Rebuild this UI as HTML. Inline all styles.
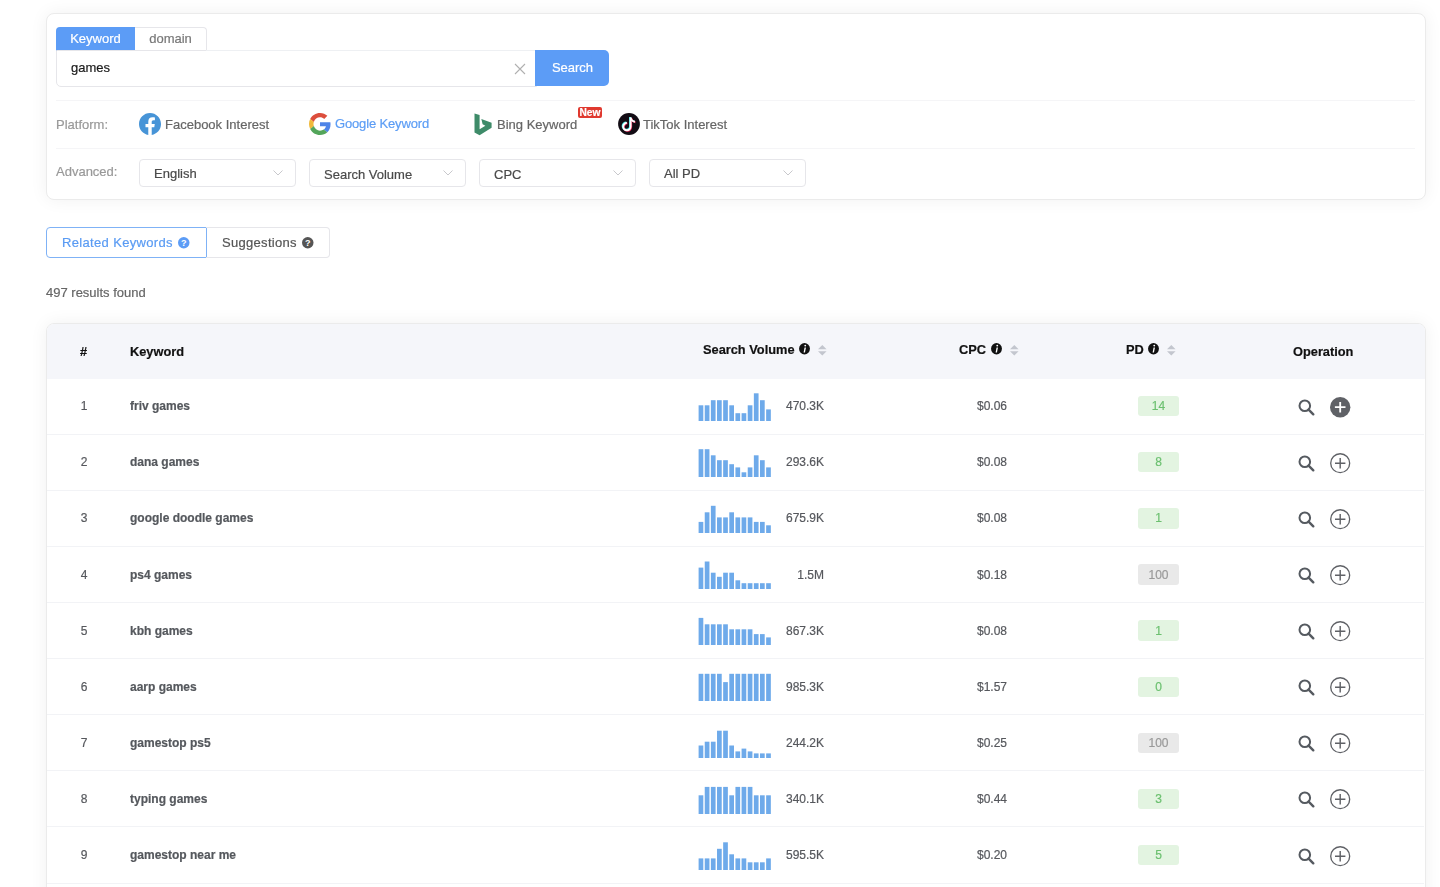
<!DOCTYPE html>
<html><head><meta charset="utf-8"><style>
html,body{margin:0;padding:0;background:#fff;width:1440px;height:887px;overflow:hidden;}
body{position:relative;font-family:"Liberation Sans",sans-serif;}
.t{position:absolute;white-space:nowrap;line-height:20px;will-change:transform;-webkit-text-stroke:0.2px currentColor;font-family:"Liberation Sans",sans-serif;}
.box{position:absolute;}
.ic{position:absolute;overflow:visible;}
.card{position:absolute;background:#fff;border:1px solid #ebebeb;border-radius:8px;box-sizing:border-box;box-shadow:0 0 18px rgba(0,0,0,0.06);}
</style></head><body>
<div class="card" style="left:46px;top:13px;width:1380px;height:187px;"></div>
<div class="box" style="left:56px;top:27px;width:79px;height:23.5px;background:#5c9cf6;border-radius:4px 0 0 0;"></div>
<div class="t" style="left:56.0px;width:79px;text-align:center;top:29px;font-size:13px;color:#fff;font-weight:normal;">Keyword</div>
<div class="box" style="left:135px;top:27px;width:71.5px;height:23.5px;border:1px solid #e6e6ea;border-left:none;border-bottom:none;border-radius:0 4px 0 0;box-sizing:border-box;"></div>
<div class="t" style="left:135.0px;width:71px;text-align:center;top:29px;font-size:13px;color:#777;font-weight:normal;">domain</div>
<div class="box" style="left:56px;top:50px;width:481px;height:36.8px;border:1px solid #e6e6ea;border-radius:0 0 0 5px;box-sizing:border-box;"></div>
<div class="box" style="left:206px;top:50px;width:330px;height:1px;background:#eef0f3;"></div>
<div class="t" style="left:70.6px;top:58px;font-size:13px;color:#1a1a1a;font-weight:normal;">games</div>
<svg class="ic" style="left:514.2px;top:62.9px" width="12" height="12" viewBox="0 0 12 12"><path d="M1 1L11 11M11 1L1 11" stroke="#b0b0b0" stroke-width="1.1"/></svg>
<div class="box" style="left:535.4px;top:49.8px;width:73.6px;height:36.6px;background:#5c9cf6;border-radius:0 5px 5px 0;"></div>
<div class="t" style="left:535.5px;width:73px;text-align:center;top:58px;font-size:13px;color:#fff;font-weight:normal;">Search</div>
<div class="box" style="left:56px;top:100px;width:1359px;height:1px;background:#f5f5f7;"></div>
<div class="box" style="left:56px;top:148px;width:1359px;height:1px;background:#f5f5f7;"></div>
<div class="t" style="left:56.3px;top:115px;font-size:13px;color:#999;font-weight:normal;">Platform:</div>
<svg class="ic" style="left:139px;top:113px" width="22" height="22" viewBox="0 0 24 24"><path fill="#4794d7" d="M24 12.073c0-6.627-5.373-12-12-12s-12 5.373-12 12c0 5.99 4.388 10.954 10.125 11.854v-8.385H7.078v-3.47h3.047V9.43c0-3.007 1.792-4.669 4.533-4.669 1.312 0 2.686.235 2.686.235v2.953H15.83c-1.491 0-1.956.925-1.956 1.874v2.25h3.328l-.532 3.47h-2.796v8.385C19.612 23.027 24 18.062 24 12.073z"/></svg>
<div class="t" style="left:164.6px;top:115px;font-size:13px;color:#666;font-weight:normal;">Facebook Interest</div>
<svg class="ic" style="left:309px;top:113px" width="22" height="22" viewBox="0 0 48 48"><path fill="#dc4e3c" d="M24 9.5c3.54 0 6.71 1.22 9.21 3.6l6.85-6.85C35.9 2.38 30.47 0 24 0 14.62 0 6.51 5.38 2.56 13.22l7.98 6.19C12.43 13.72 17.74 9.5 24 9.5z"/><path fill="#4e84e8" d="M46.98 24.55c0-1.570-.15-3.09-.38-4.55H24v9.02h12.94c-.58 2.96-2.26 5.48-4.78 7.18l7.73 6c4.51-4.18 7.09-10.36 7.09-17.65z"/><path fill="#f0b93a" d="M10.53 28.59c-.48-1.45-.76-2.99-.76-4.59s.27-3.14.76-4.59l-7.98-6.19C.92 16.46 0 20.12 0 24c0 3.88.92 7.54 2.56 10.78l7.97-6.19z"/><path fill="#53a55a" d="M24 48c6.48 0 11.930-2.13 15.89-5.81l-7.73-6c-2.15 1.45-4.92 2.3-8.160 2.3-6.26 0-11.57-4.22-13.47-9.91l-7.98 6.19C6.51 42.62 14.62 48 24 48z"/></svg>
<div class="t" style="left:334.9px;top:114px;font-size:13px;color:#5c9df5;font-weight:normal;letter-spacing:-0.15px;">Google Keyword</div>
<svg class="ic" style="left:473.5px;top:112.5px" width="18" height="23" viewBox="0 0 18 23"><path fill="#3e8b69" d="M0.5 0.4L5.6 2.1V16.3L11.4 12.8L8.6 11.3L7.35 6L17.6 9.85V14.8L5.6 22.3L0.5 19.5Z"/></svg>
<div class="t" style="left:497.1px;top:115px;font-size:13px;color:#666;font-weight:normal;">Bing Keyword</div>
<div class="box" style="left:578px;top:106.8px;width:24px;height:10.8px;background:#e0392f;border-radius:2px;"></div>
<div class="t" style="left:578.2px;width:24px;text-align:center;top:103px;font-size:10.2px;color:#fff;font-weight:bold;">New</div>
<svg class="ic" style="left:617.5px;top:112.6px" width="22" height="22" viewBox="0 0 22 22"><circle cx="11" cy="11" r="10.9" fill="#120c14"/><g transform="translate(-0.6,-0.5)" fill="none" stroke="#3ee8e8" stroke-width="1.9"><path d="M12.6 4.6V13.6A3.7 3.7 0 1 1 8.9 9.9"/><path d="M12.6 4.6C13 6.9 14.6 8.4 16.9 8.7"/></g><g transform="translate(0.6,0.5)" fill="none" stroke="#f0285a" stroke-width="1.9"><path d="M12.6 4.6V13.6A3.7 3.7 0 1 1 8.9 9.9"/><path d="M12.6 4.6C13 6.9 14.6 8.4 16.9 8.7"/></g><g transform="translate(0,0)" fill="none" stroke="#fff" stroke-width="1.9"><path d="M12.6 4.6V13.6A3.7 3.7 0 1 1 8.9 9.9"/><path d="M12.6 4.6C13 6.9 14.6 8.4 16.9 8.7"/></g></svg>
<div class="t" style="left:643.3px;top:115px;font-size:13px;color:#666;font-weight:normal;">TikTok Interest</div>
<div class="t" style="left:56.3px;top:162px;font-size:13px;color:#999;font-weight:normal;">Advanced:</div>
<div class="box" style="left:139px;top:159.3px;width:157px;height:27.6px;border:1px solid #e6e6ea;border-radius:4px;box-sizing:border-box;"></div>
<div class="t" style="left:153.6px;top:164px;font-size:13px;color:#4a4a4a;font-weight:normal;">English</div>
<svg class="ic" style="left:273.3px;top:169.9px" width="10" height="6" viewBox="0 0 10 6"><path d="M0.5 0.5L5 5L9.5 0.5" fill="none" stroke="#c8c8cc" stroke-width="1"/></svg>
<div class="box" style="left:309px;top:159.3px;width:157px;height:27.6px;border:1px solid #e6e6ea;border-radius:4px;box-sizing:border-box;"></div>
<div class="t" style="left:323.6px;top:165px;font-size:13px;color:#4a4a4a;font-weight:normal;">Search Volume</div>
<svg class="ic" style="left:443.3px;top:169.9px" width="10" height="6" viewBox="0 0 10 6"><path d="M0.5 0.5L5 5L9.5 0.5" fill="none" stroke="#c8c8cc" stroke-width="1"/></svg>
<div class="box" style="left:479px;top:159.3px;width:157px;height:27.6px;border:1px solid #e6e6ea;border-radius:4px;box-sizing:border-box;"></div>
<div class="t" style="left:493.6px;top:165px;font-size:13px;color:#4a4a4a;font-weight:normal;">CPC</div>
<svg class="ic" style="left:613.3px;top:169.9px" width="10" height="6" viewBox="0 0 10 6"><path d="M0.5 0.5L5 5L9.5 0.5" fill="none" stroke="#c8c8cc" stroke-width="1"/></svg>
<div class="box" style="left:649px;top:159.3px;width:157px;height:27.6px;border:1px solid #e6e6ea;border-radius:4px;box-sizing:border-box;"></div>
<div class="t" style="left:663.6px;top:164px;font-size:13px;color:#4a4a4a;font-weight:normal;">All PD</div>
<svg class="ic" style="left:783.3px;top:169.9px" width="10" height="6" viewBox="0 0 10 6"><path d="M0.5 0.5L5 5L9.5 0.5" fill="none" stroke="#c8c8cc" stroke-width="1"/></svg>
<div class="box" style="left:46px;top:227px;width:161px;height:31px;border:1px solid #7fb2f6;border-radius:4px 0 0 4px;box-sizing:border-box;"></div>
<div class="box" style="left:206px;top:227px;width:124px;height:31px;border:1px solid #e6e6ea;border-left:none;border-radius:0 4px 4px 0;box-sizing:border-box;"></div>
<div class="t" style="left:62px;top:233px;font-size:13px;color:#5a9bf3;font-weight:normal;letter-spacing:0.34px;">Related Keywords</div>
<svg class="ic" style="left:178.3px;top:237px" width="11.5" height="11.5" viewBox="0 0 12 12"><circle cx="6" cy="6" r="6" fill="#5c9cf6"/><text x="6" y="9.6" text-anchor="middle" font-size="9.5" font-weight="bold" fill="#fff" font-family="Liberation Sans">?</text></svg>
<div class="t" style="left:221.8px;top:233px;font-size:13px;color:#555;font-weight:normal;letter-spacing:0.3px;">Suggestions</div>
<svg class="ic" style="left:302.2px;top:237px" width="11.5" height="11.5" viewBox="0 0 12 12"><circle cx="6" cy="6" r="6" fill="#555"/><text x="6" y="9.6" text-anchor="middle" font-size="9.5" font-weight="bold" fill="#fff" font-family="Liberation Sans">?</text></svg>
<div class="t" style="left:45.8px;top:283px;font-size:13px;color:#666;font-weight:normal;">497 results found</div>
<div class="card" style="left:46px;top:323px;width:1380px;height:620px;overflow:hidden;"><div style="position:absolute;left:0;top:0;right:0;height:54.8px;background:#f5f6fa;"></div></div>
<div class="t" style="left:79.9px;top:342px;font-size:12.8px;color:#111;font-weight:bold;">#</div>
<div class="t" style="left:130px;top:342px;font-size:12.8px;color:#111;font-weight:bold;">Keyword</div>
<div class="t" style="left:703px;top:340px;font-size:12.8px;color:#111;font-weight:bold;">Search Volume</div>
<svg class="ic" style="left:799.2px;top:343.3px" width="11" height="11.4" viewBox="0 0 11 11.4"><ellipse cx="5.5" cy="5.7" rx="5.45" ry="5.7" fill="#111"/><circle cx="6.25" cy="2.6" r="0.95" fill="#fff"/><path d="M5.55 4.6H6.95L6.0 9.5H4.6Z" fill="#fff"/></svg>
<svg class="ic" style="left:818.2px;top:344.7px" width="8.6" height="10.4" viewBox="0 0 8.6 10.4"><path d="M4.3 0L8.6 4.2H0Z" fill="#c3c6ce"/><path d="M4.3 10.4L8.6 6.2H0Z" fill="#c3c6ce"/></svg>
<div class="t" style="left:959px;top:340px;font-size:12.8px;color:#111;font-weight:bold;">CPC</div>
<svg class="ic" style="left:991.1px;top:343.3px" width="11" height="11.4" viewBox="0 0 11 11.4"><ellipse cx="5.5" cy="5.7" rx="5.45" ry="5.7" fill="#111"/><circle cx="6.25" cy="2.6" r="0.95" fill="#fff"/><path d="M5.55 4.6H6.95L6.0 9.5H4.6Z" fill="#fff"/></svg>
<svg class="ic" style="left:1009.7px;top:344.7px" width="8.6" height="10.4" viewBox="0 0 8.6 10.4"><path d="M4.3 0L8.6 4.2H0Z" fill="#c3c6ce"/><path d="M4.3 10.4L8.6 6.2H0Z" fill="#c3c6ce"/></svg>
<div class="t" style="left:1126px;top:340px;font-size:12.8px;color:#111;font-weight:bold;">PD</div>
<svg class="ic" style="left:1148.2px;top:343.3px" width="11" height="11.4" viewBox="0 0 11 11.4"><ellipse cx="5.5" cy="5.7" rx="5.45" ry="5.7" fill="#111"/><circle cx="6.25" cy="2.6" r="0.95" fill="#fff"/><path d="M5.55 4.6H6.95L6.0 9.5H4.6Z" fill="#fff"/></svg>
<svg class="ic" style="left:1166.8px;top:344.7px" width="8.6" height="10.4" viewBox="0 0 8.6 10.4"><path d="M4.3 0L8.6 4.2H0Z" fill="#c3c6ce"/><path d="M4.3 10.4L8.6 6.2H0Z" fill="#c3c6ce"/></svg>
<div class="t" style="left:1293px;top:342px;font-size:12.8px;color:#111;font-weight:bold;">Operation</div>
<div class="box" style="left:47px;top:433.500px;width:1377px;height:1px;background:#f2f3f6;"></div>
<div class="t" style="left:68.5px;width:30px;text-align:center;top:396px;font-size:12px;color:#56585d;font-weight:normal;">1</div>
<div class="t" style="left:130px;top:396px;font-size:12px;color:#55585d;font-weight:bold;">friv games</div>
<svg class="ic" style="left:698px;top:390.800px" width="74" height="30" viewBox="0 0 74 30"><rect x="0.600" y="14.30" width="4.7" height="15.7" fill="#6eaaea"/><rect x="6.740" y="14.30" width="4.7" height="15.7" fill="#6eaaea"/><rect x="12.880" y="9.20" width="4.7" height="20.8" fill="#6eaaea"/><rect x="19.020" y="9.20" width="4.7" height="20.8" fill="#6eaaea"/><rect x="25.160" y="9.20" width="4.7" height="20.8" fill="#6eaaea"/><rect x="31.300" y="14.30" width="4.7" height="15.7" fill="#6eaaea"/><rect x="37.440" y="22.20" width="4.7" height="7.8" fill="#6eaaea"/><rect x="43.580" y="22.20" width="4.7" height="7.8" fill="#6eaaea"/><rect x="49.720" y="14.30" width="4.7" height="15.7" fill="#6eaaea"/><rect x="55.860" y="2.30" width="4.7" height="27.7" fill="#6eaaea"/><rect x="62.000" y="9.20" width="4.7" height="20.8" fill="#6eaaea"/><rect x="68.140" y="18.40" width="4.7" height="11.6" fill="#6eaaea"/></svg>
<div class="t" style="left:764px;width:60px;text-align:right;top:396px;font-size:12px;color:#56585d;font-weight:normal;">470.3K</div>
<div class="t" style="left:977px;top:396px;font-size:12px;color:#56585d;font-weight:normal;">$0.06</div>
<div class="box" style="left:1138.3px;top:395.900px;width:41px;height:20.4px;background:#e3f4e1;border-radius:3px;"></div>
<div class="t" style="left:1138.3px;width:41px;text-align:center;top:396px;font-size:12px;color:#6cc070;font-weight:normal;">14</div>
<svg class="ic" style="left:1297.9px;top:398.500px" width="17" height="17" viewBox="0 0 17 17"><circle cx="6.8" cy="6.8" r="5.3" fill="none" stroke="#555a60" stroke-width="2"/><path d="M10.6 10.6L15.3 15.3" stroke="#555a60" stroke-width="2.4" stroke-linecap="round"/></svg>
<svg class="ic" style="left:1329.5px;top:396.500px" width="20.4" height="20.4" viewBox="0 0 20 20"><circle cx="10" cy="10" r="10" fill="#5f6166"/><path d="M10 4.8V15.2M4.8 10H15.2" stroke="#fff" stroke-width="1.8"/></svg>
<div class="box" style="left:47px;top:489.625px;width:1377px;height:1px;background:#f2f3f6;"></div>
<div class="t" style="left:68.5px;width:30px;text-align:center;top:452px;font-size:12px;color:#56585d;font-weight:normal;">2</div>
<div class="t" style="left:130px;top:452px;font-size:12px;color:#55585d;font-weight:bold;">dana games</div>
<svg class="ic" style="left:698px;top:446.925px" width="74" height="30" viewBox="0 0 74 30"><rect x="0.600" y="2.20" width="4.7" height="27.8" fill="#6eaaea"/><rect x="6.740" y="2.20" width="4.7" height="27.8" fill="#6eaaea"/><rect x="12.880" y="8.30" width="4.7" height="21.7" fill="#6eaaea"/><rect x="19.020" y="13.20" width="4.7" height="16.8" fill="#6eaaea"/><rect x="25.160" y="13.20" width="4.7" height="16.8" fill="#6eaaea"/><rect x="31.300" y="17.20" width="4.7" height="12.8" fill="#6eaaea"/><rect x="37.440" y="20.40" width="4.7" height="9.6" fill="#6eaaea"/><rect x="43.580" y="25.30" width="4.7" height="4.7" fill="#6eaaea"/><rect x="49.720" y="20.40" width="4.7" height="9.6" fill="#6eaaea"/><rect x="55.860" y="8.30" width="4.7" height="21.7" fill="#6eaaea"/><rect x="62.000" y="13.20" width="4.7" height="16.8" fill="#6eaaea"/><rect x="68.140" y="20.40" width="4.7" height="9.6" fill="#6eaaea"/></svg>
<div class="t" style="left:764px;width:60px;text-align:right;top:452px;font-size:12px;color:#56585d;font-weight:normal;">293.6K</div>
<div class="t" style="left:977px;top:452px;font-size:12px;color:#56585d;font-weight:normal;">$0.08</div>
<div class="box" style="left:1138.3px;top:452.025px;width:41px;height:20.4px;background:#e3f4e1;border-radius:3px;"></div>
<div class="t" style="left:1138.3px;width:41px;text-align:center;top:452px;font-size:12px;color:#6cc070;font-weight:normal;">8</div>
<svg class="ic" style="left:1297.9px;top:454.625px" width="17" height="17" viewBox="0 0 17 17"><circle cx="6.8" cy="6.8" r="5.3" fill="none" stroke="#555a60" stroke-width="2"/><path d="M10.6 10.6L15.3 15.3" stroke="#555a60" stroke-width="2.4" stroke-linecap="round"/></svg>
<svg class="ic" style="left:1329.5px;top:452.625px" width="20.4" height="20.4" viewBox="0 0 20 20"><circle cx="10" cy="10" r="9.3" fill="none" stroke="#5f6166" stroke-width="1.3"/><path d="M10 4.9V15.1M4.9 10H15.1" stroke="#5f6166" stroke-width="1.4"/></svg>
<div class="box" style="left:47px;top:545.750px;width:1377px;height:1px;background:#f2f3f6;"></div>
<div class="t" style="left:68.5px;width:30px;text-align:center;top:508px;font-size:12px;color:#56585d;font-weight:normal;">3</div>
<div class="t" style="left:130px;top:508px;font-size:12px;color:#55585d;font-weight:bold;">google doodle games</div>
<svg class="ic" style="left:698px;top:503.050px" width="74" height="30" viewBox="0 0 74 30"><rect x="0.600" y="18.90" width="4.7" height="11.1" fill="#6eaaea"/><rect x="6.740" y="9.30" width="4.7" height="20.7" fill="#6eaaea"/><rect x="12.880" y="2.80" width="4.7" height="27.2" fill="#6eaaea"/><rect x="19.020" y="14.40" width="4.7" height="15.6" fill="#6eaaea"/><rect x="25.160" y="14.40" width="4.7" height="15.6" fill="#6eaaea"/><rect x="31.300" y="9.30" width="4.7" height="20.7" fill="#6eaaea"/><rect x="37.440" y="14.40" width="4.7" height="15.6" fill="#6eaaea"/><rect x="43.580" y="14.40" width="4.7" height="15.6" fill="#6eaaea"/><rect x="49.720" y="14.40" width="4.7" height="15.6" fill="#6eaaea"/><rect x="55.860" y="18.90" width="4.7" height="11.1" fill="#6eaaea"/><rect x="62.000" y="18.90" width="4.7" height="11.1" fill="#6eaaea"/><rect x="68.140" y="22.30" width="4.7" height="7.7" fill="#6eaaea"/></svg>
<div class="t" style="left:764px;width:60px;text-align:right;top:508px;font-size:12px;color:#56585d;font-weight:normal;">675.9K</div>
<div class="t" style="left:977px;top:508px;font-size:12px;color:#56585d;font-weight:normal;">$0.08</div>
<div class="box" style="left:1138.3px;top:508.150px;width:41px;height:20.4px;background:#e3f4e1;border-radius:3px;"></div>
<div class="t" style="left:1138.3px;width:41px;text-align:center;top:508px;font-size:12px;color:#6cc070;font-weight:normal;">1</div>
<svg class="ic" style="left:1297.9px;top:510.750px" width="17" height="17" viewBox="0 0 17 17"><circle cx="6.8" cy="6.8" r="5.3" fill="none" stroke="#555a60" stroke-width="2"/><path d="M10.6 10.6L15.3 15.3" stroke="#555a60" stroke-width="2.4" stroke-linecap="round"/></svg>
<svg class="ic" style="left:1329.5px;top:508.750px" width="20.4" height="20.4" viewBox="0 0 20 20"><circle cx="10" cy="10" r="9.3" fill="none" stroke="#5f6166" stroke-width="1.3"/><path d="M10 4.9V15.1M4.9 10H15.1" stroke="#5f6166" stroke-width="1.4"/></svg>
<div class="box" style="left:47px;top:601.875px;width:1377px;height:1px;background:#f2f3f6;"></div>
<div class="t" style="left:68.5px;width:30px;text-align:center;top:565px;font-size:12px;color:#56585d;font-weight:normal;">4</div>
<div class="t" style="left:130px;top:565px;font-size:12px;color:#55585d;font-weight:bold;">ps4 games</div>
<svg class="ic" style="left:698px;top:559.175px" width="74" height="30" viewBox="0 0 74 30"><rect x="0.600" y="8.60" width="4.7" height="21.4" fill="#6eaaea"/><rect x="6.740" y="2.50" width="4.7" height="27.5" fill="#6eaaea"/><rect x="12.880" y="13.70" width="4.7" height="16.3" fill="#6eaaea"/><rect x="19.020" y="17.80" width="4.7" height="12.2" fill="#6eaaea"/><rect x="25.160" y="13.70" width="4.7" height="16.3" fill="#6eaaea"/><rect x="31.300" y="13.70" width="4.7" height="16.3" fill="#6eaaea"/><rect x="37.440" y="21.30" width="4.7" height="8.7" fill="#6eaaea"/><rect x="43.580" y="24.20" width="4.7" height="5.8" fill="#6eaaea"/><rect x="49.720" y="24.20" width="4.7" height="5.8" fill="#6eaaea"/><rect x="55.860" y="24.20" width="4.7" height="5.8" fill="#6eaaea"/><rect x="62.000" y="24.20" width="4.7" height="5.8" fill="#6eaaea"/><rect x="68.140" y="24.20" width="4.7" height="5.8" fill="#6eaaea"/></svg>
<div class="t" style="left:764px;width:60px;text-align:right;top:565px;font-size:12px;color:#56585d;font-weight:normal;">1.5M</div>
<div class="t" style="left:977px;top:565px;font-size:12px;color:#56585d;font-weight:normal;">$0.18</div>
<div class="box" style="left:1138.3px;top:564.275px;width:41px;height:20.4px;background:#e9e9e9;border-radius:3px;"></div>
<div class="t" style="left:1138.3px;width:41px;text-align:center;top:565px;font-size:12px;color:#999;font-weight:normal;">100</div>
<svg class="ic" style="left:1297.9px;top:566.875px" width="17" height="17" viewBox="0 0 17 17"><circle cx="6.8" cy="6.8" r="5.3" fill="none" stroke="#555a60" stroke-width="2"/><path d="M10.6 10.6L15.3 15.3" stroke="#555a60" stroke-width="2.4" stroke-linecap="round"/></svg>
<svg class="ic" style="left:1329.5px;top:564.875px" width="20.4" height="20.4" viewBox="0 0 20 20"><circle cx="10" cy="10" r="9.3" fill="none" stroke="#5f6166" stroke-width="1.3"/><path d="M10 4.9V15.1M4.9 10H15.1" stroke="#5f6166" stroke-width="1.4"/></svg>
<div class="box" style="left:47px;top:658.000px;width:1377px;height:1px;background:#f2f3f6;"></div>
<div class="t" style="left:68.5px;width:30px;text-align:center;top:621px;font-size:12px;color:#56585d;font-weight:normal;">5</div>
<div class="t" style="left:130px;top:621px;font-size:12px;color:#55585d;font-weight:bold;">kbh games</div>
<svg class="ic" style="left:698px;top:615.300px" width="74" height="30" viewBox="0 0 74 30"><rect x="0.600" y="2.90" width="4.7" height="27.1" fill="#6eaaea"/><rect x="6.740" y="9.30" width="4.7" height="20.7" fill="#6eaaea"/><rect x="12.880" y="9.30" width="4.7" height="20.7" fill="#6eaaea"/><rect x="19.020" y="9.30" width="4.7" height="20.7" fill="#6eaaea"/><rect x="25.160" y="9.30" width="4.7" height="20.7" fill="#6eaaea"/><rect x="31.300" y="14.30" width="4.7" height="15.7" fill="#6eaaea"/><rect x="37.440" y="14.30" width="4.7" height="15.7" fill="#6eaaea"/><rect x="43.580" y="14.30" width="4.7" height="15.7" fill="#6eaaea"/><rect x="49.720" y="14.30" width="4.7" height="15.7" fill="#6eaaea"/><rect x="55.860" y="19.10" width="4.7" height="10.9" fill="#6eaaea"/><rect x="62.000" y="19.10" width="4.7" height="10.9" fill="#6eaaea"/><rect x="68.140" y="22.40" width="4.7" height="7.6" fill="#6eaaea"/></svg>
<div class="t" style="left:764px;width:60px;text-align:right;top:621px;font-size:12px;color:#56585d;font-weight:normal;">867.3K</div>
<div class="t" style="left:977px;top:621px;font-size:12px;color:#56585d;font-weight:normal;">$0.08</div>
<div class="box" style="left:1138.3px;top:620.400px;width:41px;height:20.4px;background:#e3f4e1;border-radius:3px;"></div>
<div class="t" style="left:1138.3px;width:41px;text-align:center;top:621px;font-size:12px;color:#6cc070;font-weight:normal;">1</div>
<svg class="ic" style="left:1297.9px;top:623.000px" width="17" height="17" viewBox="0 0 17 17"><circle cx="6.8" cy="6.8" r="5.3" fill="none" stroke="#555a60" stroke-width="2"/><path d="M10.6 10.6L15.3 15.3" stroke="#555a60" stroke-width="2.4" stroke-linecap="round"/></svg>
<svg class="ic" style="left:1329.5px;top:621.000px" width="20.4" height="20.4" viewBox="0 0 20 20"><circle cx="10" cy="10" r="9.3" fill="none" stroke="#5f6166" stroke-width="1.3"/><path d="M10 4.9V15.1M4.9 10H15.1" stroke="#5f6166" stroke-width="1.4"/></svg>
<div class="box" style="left:47px;top:714.125px;width:1377px;height:1px;background:#f2f3f6;"></div>
<div class="t" style="left:68.5px;width:30px;text-align:center;top:677px;font-size:12px;color:#56585d;font-weight:normal;">6</div>
<div class="t" style="left:130px;top:677px;font-size:12px;color:#55585d;font-weight:bold;">aarp games</div>
<svg class="ic" style="left:698px;top:671.425px" width="74" height="30" viewBox="0 0 74 30"><rect x="0.600" y="2.80" width="4.7" height="27.2" fill="#6eaaea"/><rect x="6.740" y="2.80" width="4.7" height="27.2" fill="#6eaaea"/><rect x="12.880" y="2.80" width="4.7" height="27.2" fill="#6eaaea"/><rect x="19.020" y="2.80" width="4.7" height="27.2" fill="#6eaaea"/><rect x="25.160" y="11.10" width="4.7" height="18.9" fill="#6eaaea"/><rect x="31.300" y="2.80" width="4.7" height="27.2" fill="#6eaaea"/><rect x="37.440" y="2.80" width="4.7" height="27.2" fill="#6eaaea"/><rect x="43.580" y="2.80" width="4.7" height="27.2" fill="#6eaaea"/><rect x="49.720" y="2.80" width="4.7" height="27.2" fill="#6eaaea"/><rect x="55.860" y="2.80" width="4.7" height="27.2" fill="#6eaaea"/><rect x="62.000" y="2.80" width="4.7" height="27.2" fill="#6eaaea"/><rect x="68.140" y="2.80" width="4.7" height="27.2" fill="#6eaaea"/></svg>
<div class="t" style="left:764px;width:60px;text-align:right;top:677px;font-size:12px;color:#56585d;font-weight:normal;">985.3K</div>
<div class="t" style="left:977px;top:677px;font-size:12px;color:#56585d;font-weight:normal;">$1.57</div>
<div class="box" style="left:1138.3px;top:676.525px;width:41px;height:20.4px;background:#e3f4e1;border-radius:3px;"></div>
<div class="t" style="left:1138.3px;width:41px;text-align:center;top:677px;font-size:12px;color:#6cc070;font-weight:normal;">0</div>
<svg class="ic" style="left:1297.9px;top:679.125px" width="17" height="17" viewBox="0 0 17 17"><circle cx="6.8" cy="6.8" r="5.3" fill="none" stroke="#555a60" stroke-width="2"/><path d="M10.6 10.6L15.3 15.3" stroke="#555a60" stroke-width="2.4" stroke-linecap="round"/></svg>
<svg class="ic" style="left:1329.5px;top:677.125px" width="20.4" height="20.4" viewBox="0 0 20 20"><circle cx="10" cy="10" r="9.3" fill="none" stroke="#5f6166" stroke-width="1.3"/><path d="M10 4.9V15.1M4.9 10H15.1" stroke="#5f6166" stroke-width="1.4"/></svg>
<div class="box" style="left:47px;top:770.250px;width:1377px;height:1px;background:#f2f3f6;"></div>
<div class="t" style="left:68.5px;width:30px;text-align:center;top:733px;font-size:12px;color:#56585d;font-weight:normal;">7</div>
<div class="t" style="left:130px;top:733px;font-size:12px;color:#55585d;font-weight:bold;">gamestop ps5</div>
<svg class="ic" style="left:698px;top:727.550px" width="74" height="30" viewBox="0 0 74 30"><rect x="0.600" y="17.50" width="4.7" height="12.5" fill="#6eaaea"/><rect x="6.740" y="13.70" width="4.7" height="16.3" fill="#6eaaea"/><rect x="12.880" y="13.70" width="4.7" height="16.3" fill="#6eaaea"/><rect x="19.020" y="2.70" width="4.7" height="27.3" fill="#6eaaea"/><rect x="25.160" y="2.70" width="4.7" height="27.3" fill="#6eaaea"/><rect x="31.300" y="17.50" width="4.7" height="12.5" fill="#6eaaea"/><rect x="37.440" y="23.40" width="4.7" height="6.6" fill="#6eaaea"/><rect x="43.580" y="20.60" width="4.7" height="9.4" fill="#6eaaea"/><rect x="49.720" y="23.40" width="4.7" height="6.6" fill="#6eaaea"/><rect x="55.860" y="25.40" width="4.7" height="4.6" fill="#6eaaea"/><rect x="62.000" y="25.40" width="4.7" height="4.6" fill="#6eaaea"/><rect x="68.140" y="25.40" width="4.7" height="4.6" fill="#6eaaea"/></svg>
<div class="t" style="left:764px;width:60px;text-align:right;top:733px;font-size:12px;color:#56585d;font-weight:normal;">244.2K</div>
<div class="t" style="left:977px;top:733px;font-size:12px;color:#56585d;font-weight:normal;">$0.25</div>
<div class="box" style="left:1138.3px;top:732.650px;width:41px;height:20.4px;background:#e9e9e9;border-radius:3px;"></div>
<div class="t" style="left:1138.3px;width:41px;text-align:center;top:733px;font-size:12px;color:#999;font-weight:normal;">100</div>
<svg class="ic" style="left:1297.9px;top:735.250px" width="17" height="17" viewBox="0 0 17 17"><circle cx="6.8" cy="6.8" r="5.3" fill="none" stroke="#555a60" stroke-width="2"/><path d="M10.6 10.6L15.3 15.3" stroke="#555a60" stroke-width="2.4" stroke-linecap="round"/></svg>
<svg class="ic" style="left:1329.5px;top:733.250px" width="20.4" height="20.4" viewBox="0 0 20 20"><circle cx="10" cy="10" r="9.3" fill="none" stroke="#5f6166" stroke-width="1.3"/><path d="M10 4.9V15.1M4.9 10H15.1" stroke="#5f6166" stroke-width="1.4"/></svg>
<div class="box" style="left:47px;top:826.375px;width:1377px;height:1px;background:#f2f3f6;"></div>
<div class="t" style="left:68.5px;width:30px;text-align:center;top:789px;font-size:12px;color:#56585d;font-weight:normal;">8</div>
<div class="t" style="left:130px;top:789px;font-size:12px;color:#55585d;font-weight:bold;">typing games</div>
<svg class="ic" style="left:698px;top:783.675px" width="74" height="30" viewBox="0 0 74 30"><rect x="0.600" y="11.30" width="4.7" height="18.7" fill="#6eaaea"/><rect x="6.740" y="2.90" width="4.7" height="27.1" fill="#6eaaea"/><rect x="12.880" y="2.90" width="4.7" height="27.1" fill="#6eaaea"/><rect x="19.020" y="2.90" width="4.7" height="27.1" fill="#6eaaea"/><rect x="25.160" y="2.90" width="4.7" height="27.1" fill="#6eaaea"/><rect x="31.300" y="11.30" width="4.7" height="18.7" fill="#6eaaea"/><rect x="37.440" y="2.90" width="4.7" height="27.1" fill="#6eaaea"/><rect x="43.580" y="2.90" width="4.7" height="27.1" fill="#6eaaea"/><rect x="49.720" y="2.90" width="4.7" height="27.1" fill="#6eaaea"/><rect x="55.860" y="11.30" width="4.7" height="18.7" fill="#6eaaea"/><rect x="62.000" y="11.30" width="4.7" height="18.7" fill="#6eaaea"/><rect x="68.140" y="11.30" width="4.7" height="18.7" fill="#6eaaea"/></svg>
<div class="t" style="left:764px;width:60px;text-align:right;top:789px;font-size:12px;color:#56585d;font-weight:normal;">340.1K</div>
<div class="t" style="left:977px;top:789px;font-size:12px;color:#56585d;font-weight:normal;">$0.44</div>
<div class="box" style="left:1138.3px;top:788.775px;width:41px;height:20.4px;background:#e3f4e1;border-radius:3px;"></div>
<div class="t" style="left:1138.3px;width:41px;text-align:center;top:789px;font-size:12px;color:#6cc070;font-weight:normal;">3</div>
<svg class="ic" style="left:1297.9px;top:791.375px" width="17" height="17" viewBox="0 0 17 17"><circle cx="6.8" cy="6.8" r="5.3" fill="none" stroke="#555a60" stroke-width="2"/><path d="M10.6 10.6L15.3 15.3" stroke="#555a60" stroke-width="2.4" stroke-linecap="round"/></svg>
<svg class="ic" style="left:1329.5px;top:789.375px" width="20.4" height="20.4" viewBox="0 0 20 20"><circle cx="10" cy="10" r="9.3" fill="none" stroke="#5f6166" stroke-width="1.3"/><path d="M10 4.9V15.1M4.9 10H15.1" stroke="#5f6166" stroke-width="1.4"/></svg>
<div class="box" style="left:47px;top:882.500px;width:1377px;height:1px;background:#f2f3f6;"></div>
<div class="t" style="left:68.5px;width:30px;text-align:center;top:845px;font-size:12px;color:#56585d;font-weight:normal;">9</div>
<div class="t" style="left:130px;top:845px;font-size:12px;color:#55585d;font-weight:bold;">gamestop near me</div>
<svg class="ic" style="left:698px;top:839.800px" width="74" height="30" viewBox="0 0 74 30"><rect x="0.600" y="18.40" width="4.7" height="11.6" fill="#6eaaea"/><rect x="6.740" y="18.40" width="4.7" height="11.6" fill="#6eaaea"/><rect x="12.880" y="18.40" width="4.7" height="11.6" fill="#6eaaea"/><rect x="19.020" y="8.80" width="4.7" height="21.2" fill="#6eaaea"/><rect x="25.160" y="2.30" width="4.7" height="27.7" fill="#6eaaea"/><rect x="31.300" y="14.30" width="4.7" height="15.7" fill="#6eaaea"/><rect x="37.440" y="18.40" width="4.7" height="11.6" fill="#6eaaea"/><rect x="43.580" y="18.40" width="4.7" height="11.6" fill="#6eaaea"/><rect x="49.720" y="22.30" width="4.7" height="7.7" fill="#6eaaea"/><rect x="55.860" y="22.30" width="4.7" height="7.7" fill="#6eaaea"/><rect x="62.000" y="22.30" width="4.7" height="7.7" fill="#6eaaea"/><rect x="68.140" y="18.40" width="4.7" height="11.6" fill="#6eaaea"/></svg>
<div class="t" style="left:764px;width:60px;text-align:right;top:845px;font-size:12px;color:#56585d;font-weight:normal;">595.5K</div>
<div class="t" style="left:977px;top:845px;font-size:12px;color:#56585d;font-weight:normal;">$0.20</div>
<div class="box" style="left:1138.3px;top:844.900px;width:41px;height:20.4px;background:#e3f4e1;border-radius:3px;"></div>
<div class="t" style="left:1138.3px;width:41px;text-align:center;top:845px;font-size:12px;color:#6cc070;font-weight:normal;">5</div>
<svg class="ic" style="left:1297.9px;top:847.500px" width="17" height="17" viewBox="0 0 17 17"><circle cx="6.8" cy="6.8" r="5.3" fill="none" stroke="#555a60" stroke-width="2"/><path d="M10.6 10.6L15.3 15.3" stroke="#555a60" stroke-width="2.4" stroke-linecap="round"/></svg>
<svg class="ic" style="left:1329.5px;top:845.500px" width="20.4" height="20.4" viewBox="0 0 20 20"><circle cx="10" cy="10" r="9.3" fill="none" stroke="#5f6166" stroke-width="1.3"/><path d="M10 4.9V15.1M4.9 10H15.1" stroke="#5f6166" stroke-width="1.4"/></svg>
</body></html>
